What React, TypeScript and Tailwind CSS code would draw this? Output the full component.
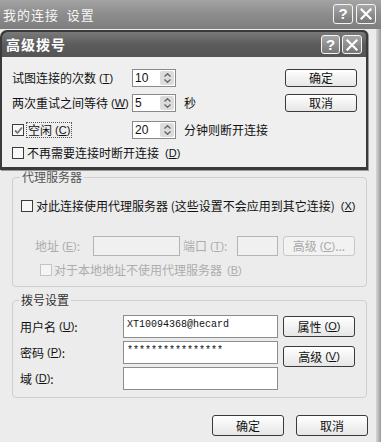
import React from "react";

const CJK = "font-['Noto_Sans_CJK_SC','Noto_Sans',sans-serif]";

function Key({ k }: { k: string }) {
  return (
    <span className="font-['Liberation_Sans',sans-serif] text-[11px] ml-[3px]">
      (<span className="underline">{k}</span>)
    </span>
  );
}

function TitleBtn({ kind, size }: { kind: "help" | "close"; size: string }) {
  return (
    <div
      className={`${size} rounded-[3px] border border-[#f4f4f4] bg-gradient-to-b from-[#a8a8a8] to-[#777] flex items-center justify-center`}
    >
      {kind === "help" ? (
        <span className="font-['Liberation_Sans',sans-serif] font-bold text-white text-[15px] leading-none">?</span>
      ) : (
        <svg width="12" height="12" viewBox="0 0 12 12">
          <path d="M1.5 1.5L10.5 10.5M10.5 1.5L1.5 10.5" stroke="#fff" strokeWidth="2.2" strokeLinecap="square" />
        </svg>
      )}
    </div>
  );
}

function Btn({ children, w = "w-[72px]", h = "h-[19px]", disabled = false }: { children: React.ReactNode; w?: string; h?: string; disabled?: boolean }) {
  return (
    <div
      className={`${w} ${h} shrink-0 rounded-[3px] border flex items-center justify-center text-[12px] ${
        disabled
          ? "border-[#c8c8c8] bg-[#f2f2f2] text-[#a8a8a8]"
          : "border-[#3a3a3a] bg-gradient-to-b from-[#ffffff] to-[#e6e6e6] text-[#111]"
      }`}
    >
      {children}
    </div>
  );
}

function Check({ checked = false, disabled = false }: { checked?: boolean; disabled?: boolean }) {
  return (
    <div
      className={`w-[12px] h-[12px] shrink-0 border flex items-center justify-center ${
        disabled ? "border-[#c4c4c4] bg-[#f4f4f4]" : "border-[#3c3c3c] bg-[#f8f8f8]"
      }`}
    >
      {checked && (
        <svg width="9" height="9" viewBox="0 0 9 9">
          <path d="M1 4.5L3.5 7L8 1.5" fill="none" stroke="#777" strokeWidth="1.8" />
        </svg>
      )}
    </div>
  );
}

function Spin({ value }: { value: string }) {
  return (
    <div className="w-[44px] h-[18px] shrink-0 border border-[#8a8a8a] bg-white flex">
      <div className="flex-1 pl-[2px] text-[12px] leading-[16px] font-['Liberation_Sans',sans-serif]">{value}</div>
      <div className="w-[14px] m-[1px] bg-[#dcdcdc] rounded-[2px] flex flex-col items-center justify-center gap-[2px]">
        <svg width="7" height="4" viewBox="0 0 7 4">
          <path d="M0.5 3.5L3.5 0.7L6.5 3.5" fill="none" stroke="#666" strokeWidth="1.3" />
        </svg>
        <svg width="7" height="4" viewBox="0 0 7 4">
          <path d="M0.5 0.5L3.5 3.3L6.5 0.5" fill="none" stroke="#666" strokeWidth="1.3" />
        </svg>
      </div>
    </div>
  );
}

function Field({ w, h = "h-[23px]", value = "", disabled = false }: { w: string; h?: string; value?: string; disabled?: boolean }) {
  return (
    <div
      className={`${w} ${h} shrink-0 border ${disabled ? "border-[#b4b4b4] bg-[#f0f0f0]" : "border-[#8c8c8c] bg-white"} pl-[3px] pt-[3px] font-['Liberation_Mono',monospace] text-[10px] leading-[12px] text-[#111]`}
    >
      {value}
    </div>
  );
}

export default function App() {
  return (
    <div className={`relative w-[381px] h-[442px] overflow-hidden bg-[#ececec] text-[#111] ${CJK}`}>
      {/* outer window */}
      <div className="h-[29px] bg-gradient-to-b from-[#a4a4a4] via-[#8c8c8c] to-[#7e7e7e] flex items-center pl-[3px] pr-[5px]">
        <span className="text-[13px] text-[#f6f6f6] tracking-[1px]">我的连接&nbsp; 设置</span>
        <div className="ml-auto flex gap-[3px] -mt-[2px]">
          <TitleBtn kind="help" size="w-[20px] h-[20px]" />
          <TitleBtn kind="close" size="w-[20px] h-[20px]" />
        </div>
      </div>

      <div className="absolute right-0 top-[29px] bottom-0 w-[5px] bg-gradient-to-r from-[#d8d8d8] to-[#9a9a9a]" />

      <div className="pl-[12px] pr-[14px] pt-[140px]">
        {/* proxy */}
        <fieldset className="border border-[#cfcfcf] rounded-[4px] h-[118px] px-[8px]">
          <legend className="px-[2px] -ml-[1px] text-[12px] leading-[16px] text-[#555]">代理服务器</legend>
          <div className="flex items-center gap-[3px] mt-[12px] text-[12px]">
            <Check />
            <span>
              对此连接使用代理服务器 (这些设置不会应用到其它连接)
            </span>
            <Key k="X" />
          </div>
          <div className="flex items-center mt-[21px] text-[12px] text-[#acacac] h-[20px]">
            <span className="ml-[14px] w-[58px] flex items-center">
              地址<Key k="E" />:
            </span>
            <Field w="w-[87px]" h="h-[20px]" disabled />
            <span className="ml-[3px] w-[54px] flex items-center">
              端口<Key k="T" />:
            </span>
            <Field w="w-[41px]" h="h-[20px]" disabled />
            <div className="ml-[5px]">
              <Btn disabled h="h-[20px]">
                高级<Key k="C" />...
              </Btn>
            </div>
          </div>
          <div className="flex items-center gap-[2px] mt-[5px] ml-[19px] text-[12px] text-[#acacac]">
            <Check disabled />
            <span>对于本地地址不使用代理服务器</span>
            <Key k="B" />
          </div>
        </fieldset>

        {/* dial */}
        <fieldset className="border border-[#cfcfcf] rounded-[4px] h-[106px] px-[7px] mt-[5px]">
          <legend className="px-[2px] -ml-[1px] text-[12px] leading-[16px] text-[#333]">拨号设置</legend>
          <div className="flex mt-[7px]">
            <div className="flex flex-col gap-[3px]">
              <div className="flex items-center">
                <span className="w-[103px] text-[12px] flex items-center">
                  用户名<Key k="U" />:
                </span>
                <Field w="w-[155px]" value="XT10094368@hecard" />
              </div>
              <div className="flex items-center">
                <span className="w-[103px] text-[12px] flex items-center">
                  密码<Key k="P" />:
                </span>
                <Field w="w-[155px]" value="****************" />
              </div>
              <div className="flex items-center">
                <span className="w-[103px] text-[12px] flex items-center">
                  域<Key k="D" />:
                </span>
                <Field w="w-[155px]" />
              </div>
            </div>
            <div className="flex flex-col ml-[5px] pt-[1px] gap-[9px]">
              <Btn h="h-[21px]">
                属性<Key k="O" />
              </Btn>
              <Btn h="h-[21px]">
                高级<Key k="V" />
              </Btn>
            </div>
          </div>
        </fieldset>

        <div className="flex justify-end gap-[12px] mt-[17px] -mr-[1px]">
          <Btn h="h-[21px]">确定</Btn>
          <Btn h="h-[21px]">取消</Btn>
        </div>
      </div>

      {/* advanced dial dialog, on top */}
      <div className="absolute left-0 top-[30px] w-[368px] h-[140px] rounded-tl-[7px] rounded-tr-[5px] bg-[#3a3a3a] p-[2px] pb-[3px] shadow-[1px_1px_0_#9a9a9a]">
        <div className="h-full flex flex-col rounded-tl-[6px] rounded-tr-[4px] overflow-hidden">
          <div className="h-[25px] shrink-0 bg-gradient-to-b from-[#7a7a7a] via-[#5c5c5c] to-[#545454] flex items-center pl-[4px] pr-[4px]">
            <span className="text-[14px] font-bold text-white tracking-[1px]">高级拨号</span>
            <div className="ml-auto flex gap-[2px]">
              <TitleBtn kind="help" size="w-[19px] h-[19px]" />
              <TitleBtn kind="close" size="w-[20px] h-[19px]" />
            </div>
          </div>
          <div className="flex-1 bg-[#efefef] pl-[10px] pr-[9px] pt-[12px] text-[12px]">
            <div className="flex items-center h-[18px]">
              <span className="w-[120px] flex items-center">
                试图连接的次数<Key k="T" />
              </span>
              <Spin value="10" />
              <div className="ml-auto">
                <Btn h="h-[18px]">确定</Btn>
              </div>
            </div>
            <div className="flex items-center h-[18px] mt-[7px]">
              <span className="w-[120px] flex items-center">
                两次重试之间等待<Key k="W" />
              </span>
              <Spin value="5" />
              <span className="ml-[8px]">秒</span>
              <div className="ml-auto">
                <Btn h="h-[18px]">取消</Btn>
              </div>
            </div>
            <div className="flex items-center h-[18px] mt-[9px]">
              <div className="w-[120px] flex items-center gap-[2px]">
                <Check checked />
                <span className="flex items-center border border-dotted border-[#555] px-[1px] leading-[14px]">
                  空闲<Key k="C" />
                </span>
              </div>
              <Spin value="20" />
              <span className="ml-[8px]">分钟则断开连接</span>
            </div>
            <div className="flex items-center h-[18px] mt-[5px] gap-[3px]">
              <Check />
              <span>不再需要连接时断开连接</span>
              <Key k="D" />
            </div>
          </div>
        </div>
      </div>
    </div>
  );
}
